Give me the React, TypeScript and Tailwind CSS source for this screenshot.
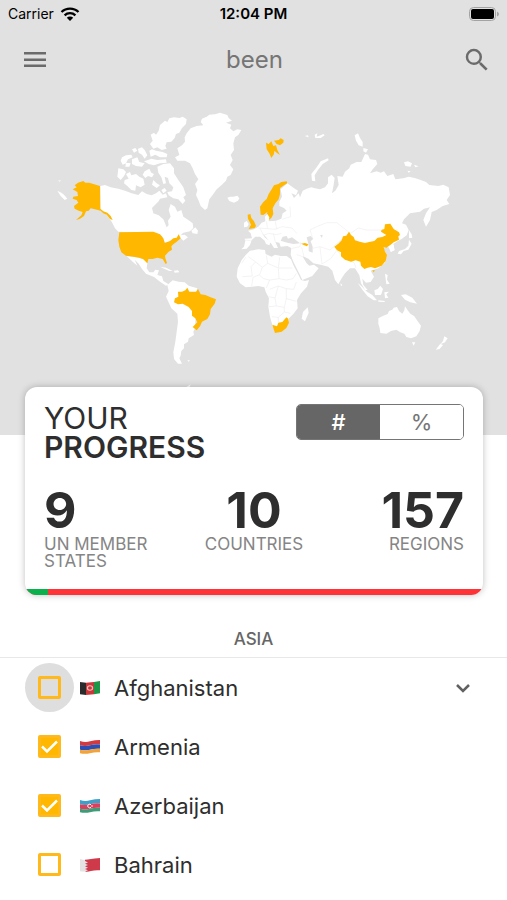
import { useState } from "react";
import type { ReactNode } from "react";

const LAND = "#ffffff";
const VISITED = "#ffb700";

const WorldMap = () => (
  <svg viewBox="0 276 1521 888" className="block w-full" role="img" aria-label="Map of visited countries">
    {/* Canada, Alaska and the arctic islands */}
    <g transform="translate(150 300)" fill={LAND}>
      <path d="M151 258 165 255 182 262 205 266 225 272 245 280 265 285 276 274 290 282 305 286 318 280 328 272 338 284 348 280 352 292 330 296 326 304 306 324 310 340 326 346 340 358 350 382 356 376 354 362 362 350 356 330 362 312 375 320 382 335 394 330 400 350 415 360 428 370 430 384 420 394 400 398 392 406 404 404 414 412 400 422 388 410 365 424 345 428 335 408 320 400 205 395 195 385 185 365 170 345 151 328Z" />
      <path d="M424 392 436 382 444 392 442 402 428 400Z" />
      <path d="M330 75 345 62 352 66 358 55 372 52 388 54 398 50 410 58 408 72 396 84 388 98 378 102 374 114 364 125 350 127 346 138 350 146 335 150 322 142 310 146 300 132 308 122 302 104 312 98 318 104 326 92Z" />
      <path d="M246 148 256 144 262 152 252 158ZM264 146 276 142 284 150 292 166 284 176 276 164 266 158ZM216 172 228 166 244 164 248 172 234 178 228 190 218 194 212 182ZM246 178 262 172 268 186 284 190 276 200 258 198 246 192ZM228 188 242 190 238 200 226 200ZM298 152 306 148 318 152 338 156 352 162 350 172 330 172 316 164 302 170ZM282 184 294 180 304 176 322 180 348 178 350 188 330 190 312 196 296 192Z" />
      <path d="M205 205 220 208 228 216 222 228 212 240 202 230ZM228 222 240 216 244 226 258 222 268 230 280 236 284 254 272 262 258 256 256 272 244 270 232 258 222 250 224 240 236 236ZM284 214 298 206 304 218 312 222 306 232 294 228 286 234 278 224ZM310 240 320 250 330 256 320 264 306 254Z" />
      <path d="M322 200 340 192 360 190 372 205 372 220 385 240 400 262 408 285 400 292 406 302 398 312 385 298 370 295 356 286 352 276 366 274 370 262 358 250 354 234 344 230 348 250 340 252 334 232 325 218ZM334 270 344 264 350 272 340 280Z" />
      <path d="M22 272 34 278 42 284 52 296 44 300 32 288ZM24 242 32 241 30 245Z" />
      <path fill={VISITED} d="M68 268 80 262 74 256 84 248 100 243 106 248 118 248 130 252 150 258 151 326 160 334 172 338 182 348 188 360 180 357 170 344 160 340 152 332 135 328 122 325 116 332 108 334 102 348 90 356 78 360 94 346 98 336 86 332 74 326 72 318 85 308 80 300 68 296 70 290 84 288 82 276Z" />
    </g>

    {/* Greenland, Iceland, Scandinavia and the British Isles */}
    <g transform="translate(510 300)" fill={LAND}>
      <path d="M22 145 36 136 45 125 44 112 50 100 62 85 80 78 100 76 92 66 96 56 110 50 118 44 135 43 150 38 172 45 176 54 186 62 168 68 184 74 180 85 190 94 202 88 214 90 205 105 195 112 190 130 192 150 182 165 188 180 180 195 190 208 182 225 172 230 168 242 155 255 140 268 128 285 118 298 112 325 105 330 92 318 85 300 78 285 82 270 75 252 85 238 75 222 68 205 60 190 45 182 22 182 15 172 28 165Z" />
      <path d="M172 293 180 290 190 290 202 287 208 295 204 302 192 308 178 303Z" />
      <path d="M222 368 230 363 236 372 232 380 222 382Z" />
      <g fill={VISITED}>
        <path d="M288 128 296 132 304 124 310 138 318 136 322 150 330 165 320 158 313 152 312 162 304 174 298 160 290 148ZM312 122 326 120 332 115 341 120 340 128 330 136 320 132Z" />
        <path d="M270 320 280 306 290 297 296 282 305 268 312 256 325 252 334 246 350 244 352 250 342 256 330 264 330 282 326 298 316 310 308 325 310 342 304 354 296 360 290 347 292 336 280 345 272 344Z" />
        <path d="M233 344 241 342 244 354 252 364 258 378 254 384 236 387 243 374 238 364 234 356Z" />
      </g>
    </g>

    {/* Europe and Asia */}
    <path
      fill={LAND}
      d="M862 550 878 562 894 572 888 586 874 580 882 594 896 580 900 592 908 572 920 566 934 562 945 565 960 568 975 562 984 550 984 532 995 524 1004 534 1000 560 996 580 1006 572 1016 555 1012 528 1028 530 1035 515 1048 505 1052 494 1070 486 1084 486 1095 462 1104 464 1110 478 1128 480 1132 492 1118 508 1110 520 1130 514 1142 518 1152 514 1162 528 1180 522 1186 538 1210 535 1226 530 1244 534 1262 540 1278 546 1288 555 1315 558 1330 554 1346 562 1350 585 1340 600 1348 612 1328 618 1310 630 1295 636 1290 660 1278 680 1270 660 1278 640 1290 622 1272 626 1260 635 1230 640 1212 658 1206 670 1218 674 1226 690 1220 706 1206 716 1192 724 1180 732 1184 750 1172 756 1166 742 1153 740 1152 750 1160 765 1155 788 1135 805 1112 812 1122 830 1112 846 1098 848 1087 836 1090 855 1103 870 1095 870 1083 850 1078 826 1065 805 1050 805 1035 820 1025 835 1015 853 1005 840 997 812 985 800 965 795 940 790 925 776 907 768 920 790 928 797 942 794 956 805 937 828 907 840 900 825 880 785 872 764 874 744 862 738 842 740 838 728 826 726 834 744 822 744 812 728 800 714 788 700 794 712 812 726 808 736 798 732 794 722 780 710 766 710 755 720 750 735 740 746 724 748 732 740 736 722 734 716 756 715 752 700 744 692 762 688 775 680 785 668 796 664 795 650 802 642 808 652 806 664 828 662 844 656 848 640 860 632 852 624 838 618 838 605 846 590 842 568Z"
    />
    {/* Inland seas */}
    <path
      fill="#e1e1e1"
      d="M842 722 848 710 860 708 864 716 876 712 892 724 900 730 880 732 862 728ZM920 712 932 708 940 716 932 724 938 740 938 758 926 754 926 736ZM960 706 968 704 966 714Z"
    />
    <path
      fill="none"
      stroke="#eeeeee"
      strokeWidth="2"
      d="M938 716 930 690 950 680 980 668 1010 668 1036 688 1050 700 1028 716 1002 738M1052 700 1075 684 1100 690 1140 690 1160 698M938 745 960 740 990 750 1004 738M905 742 912 770M960 742 966 792M966 792 992 776 1010 752 1030 770M1030 770 1062 788 1068 804M780 684 790 706 806 700 830 704 844 700M800 664 802 686 826 688 846 680 876 684 890 700M775 684 802 686M826 664 830 688M734 720 752 722M870 620 872 650 846 658M820 700 826 726M876 745 900 740 902 726M890 764 908 770"
    />

    {/* Russian arctic islands */}
    <g transform="translate(900 360)" fill={LAND}>
      <path d="M34 162 50 142 62 124 84 115 86 121 68 132 54 150 44 166 46 184 36 182ZM164 46 174 40 180 54 188 66 188 80 176 76 168 62ZM190 84 204 88 198 98 190 94ZM312 127 324 124 336 130 332 140 316 138ZM342 134 356 139 346 142ZM322 152 332 154 326 158ZM14 48 24 46 26 52ZM44 44 52 40 50 50 62 46 70 42 74 46 62 54 46 54Z" />
    </g>

    {/* Africa */}
    <g transform="translate(675 600)">
      <path
        fill={LAND}
        d="M75 152 100 148 120 150 122 162 140 170 150 164 168 168 185 168 198 178 205 195 218 220 228 240 240 243 252 240 246 260 228 280 216 300 218 325 205 342 192 355 192 368 150 396 142 375 135 350 130 320 132 295 122 275 118 262 100 258 80 260 62 262 45 250 35 230 38 205 50 180 62 165ZM234 336 248 322 251 338 240 364 230 356Z"
      />
      <path
        fill="none"
        stroke="#ededed"
        strokeWidth="2"
        d="M70 170 92 186 112 202 128 190 124 166M62 172 50 190M92 186 78 200 82 228 52 230M112 202 104 224 84 232 80 258M128 190 160 204 164 172M160 204 162 236 134 240 116 236 104 226M162 204 202 204M162 236 184 240 204 236 214 220M134 240 124 264M134 268 160 258 184 266 206 268 214 246M130 290 150 294 154 318 132 320M160 258 150 294M154 318 178 322 184 296 214 304M184 266 184 296M140 350 160 352 178 336 196 340M160 352 160 366M178 336 178 322"
      />
      <g fill={VISITED}>
        <path d="M142 374 156 379 160 368 172 366 184 352 190 356 192 368 184 384 170 395 150 399 146 388Z" />
        <path d="M228 131 240 129 250 133 246 139 238 136Z" />
      </g>
    </g>

    {/* China, south-east Asia and Oceania */}
    <g transform="translate(975 645)" fill={LAND}>
      <path d="M98 203 112 216 126 230 142 240 156 256 146 256 128 244 112 224ZM148 226 158 222 166 212 174 222 168 240 150 240ZM178 232 192 230 184 238 190 248 180 250ZM228 240 242 238 262 248 276 266 256 262 240 254ZM180 176 188 180 186 194 194 206 184 208ZM46 204 52 210 48 214ZM160 256 180 258 178 261 160 260Z" />
      <path d="M252 46 260 58 262 68 252 70ZM252 74 260 86 250 104 236 108 228 118 218 116 222 108 240 102 250 92ZM196 94 206 90 208 106 198 110ZM300 22 308 4 304 30Z" />
      <path d="M160 310 175 302 188 297 192 288 202 284 206 278 216 276 222 288 232 296 238 286 240 274 248 286 256 296 268 304 276 316 288 332 284 348 274 364 258 370 244 366 238 356 226 352 214 344 198 348 184 356 166 354 164 340 160 326ZM261 382 271 382 266 392ZM358 364 368 370 360 382 346 388 354 378ZM346 386 354 390 344 402 332 404Z" />
      <path
        fill={VISITED}
        d="M28 95 40 86 50 76 54 64 64 62 72 50 78 60 86 66 90 76 104 80 120 84 136 80 148 78 158 68 172 66 184 60 168 50 170 44 178 42 180 28 196 26 206 42 222 52 225 60 220 64 222 74 206 82 196 90 184 98 176 96 180 110 186 120 182 138 170 152 150 160 138 156 128 158 118 162 108 152 106 140 92 136 78 140 60 134 48 124 48 112 36 106ZM142 166 150 166 146 172Z"
      />
    </g>

    {/* USA and Latin America */}
    <g transform="translate(330 675)" fill={LAND}>
      <path d="M50 93 70 95 85 98 100 102 112 115 110 130 118 142 130 142 136 134 147 136 142 150 156 154 160 168 176 178 168 182 150 170 132 156 108 146 96 132 86 116 74 104 82 122 68 110ZM150 125 168 128 188 138 178 138 164 132ZM192 137 204 136 208 142 194 143Z" />
      <path d="M172 180 188 166 206 170 224 172 236 182 262 190 255 310 250 320 252 330 236 340 234 350 222 358 222 370 214 378 212 392 208 400 216 416 204 416 192 402 190 382 196 350 200 320 204 290 202 266 184 250 174 228 168 215 176 198ZM232 406 240 406 236 410ZM226 488 242 478 238 488Z" />
      <g fill={VISITED}>
        <path d="M28 22 130 20 150 28 160 40 164 54 180 48 190 40 200 38 206 28 212 40 200 50 190 58 184 64 186 74 176 80 165 92 166 100 171 114 167 117 158 102 142 98 128 102 115 102 112 115 100 103 88 98 70 95 48 92 34 82 28 65 25 45Z" />
        <path d="M195 220 205 215 204 200 216 200 226 196 232 188 238 200 258 200 264 192 272 208 286 210 300 216 318 223 314 236 302 252 300 268 292 282 276 290 270 304 260 316 248 306 262 292 256 280 246 272 246 258 236 246 218 236 204 238 192 232Z" />
      </g>
    </g>
  </svg>
);

const flags: Record<string, ReactNode> = {
  Afghanistan: (
    <>
      <path fill="#2b2b2b" d="M0 1 6 2V16L0 15Z" />
      <path fill="#c8373a" d="M6 2 14 1V15L6 16Z" />
      <path fill="#1d9645" d="M14 1 20 0V14L14 15Z" />
      <circle cx="10" cy="8" r="2.6" fill="none" stroke="#f0c0bb" strokeWidth="1.2" />
    </>
  ),
  Armenia: (
    <>
      <path fill="#d33a3f" d="M0 1Q5 3 10 1.500T20 0V5Q15 4.500 10 6T0 6Z" />
      <path fill="#2b4fb5" d="M0 6Q5 7.500 10 6T20 5V10Q15 9.500 10 11T0 11Z" />
      <path fill="#f2a33a" d="M0 11Q5 12.500 10 11T20 10V14Q15 13.500 10 15T0 15Z" />
    </>
  ),
  Azerbaijan: (
    <>
      <path fill="#3f9fc6" d="M0 1Q5 3 10 1.500T20 0V5Q15 4.500 10 6T0 6Z" />
      <path fill="#dd3e5c" d="M0 6Q5 7.500 10 6T20 5V10Q15 9.500 10 11T0 11Z" />
      <path fill="#3f9c78" d="M0 11Q5 12.500 10 11T20 10V14Q15 13.500 10 15T0 15Z" />
      <path fill="none" stroke="#ffffff" d="M11 6.500A2 2 0 1 0 11 9.500" />
      <circle cx="12" cy="8" r="0.8" fill="#ffffff" />
    </>
  ),
  Bahrain: (
    <>
      <path fill="#e4e2e2" d="M0 1Q5 3 10 1.500V15Q5 16 0 15Z" />
      <path fill="#cf3a4b" d="M5 2Q8 2 11 1.200T20 0V14Q15 13.500 11 14.800T5 15.500L8 14 5 12.500 8 11 5 9.500 8 8 5 6.500 8 5 5 3.500Z" />
    </>
  ),
};

const stats = [
  { label: "UN MEMBER STATES", value: 9, align: "text-left" },
  { label: "COUNTRIES", value: 10, align: "text-center" },
  { label: "REGIONS", value: 157, align: "text-right" },
];

const countries = [
  { name: "Afghanistan", been: false, focused: true, expandable: true },
  { name: "Armenia", been: true, focused: false, expandable: false },
  { name: "Azerbaijan", been: true, focused: false, expandable: false },
  { name: "Bahrain", been: false, focused: false, expandable: false },
];

const StatusBar = () => (
  <div className="grid grid-cols-3 items-center h-7 px-2 text-sm text-black">
    <div className="flex items-center gap-1.5">
      <span>Carrier</span>
      <svg viewBox="0 0 20 15" className="w-5 h-4" aria-hidden="true">
        <path d="M10 14.500 6.800 11.200A4.600 4.600 0 0 1 13.200 11.200Z" />
        <path fill="none" stroke="#000000" strokeWidth="2.300" d="M4.600 8.800A7.800 7.800 0 0 1 15.400 8.800M1.500 5.500A12.200 12.200 0 0 1 18.500 5.500" />
      </svg>
    </div>
    <span className="text-center text-[15px] font-semibold whitespace-nowrap">12:04 PM</span>
    <svg viewBox="0 0 30 15" className="w-[30px] h-[15px] justify-self-end" aria-hidden="true">
      <rect x="0.500" y="0.500" width="26" height="13" rx="4" fill="none" stroke="#a3a3a3" />
      <rect x="2" y="2" width="23" height="10" rx="2" />
      <path fill="#a3a3a3" d="M28 4.500Q30 5.500 30 7T28 9.500Z" />
    </svg>
  </div>
);

const TopBar = () => (
  <div className="flex items-center justify-between h-16 px-[23px] text-[#6b6b6b]">
    <button type="button" aria-label="Menu">
      <svg viewBox="0 0 24 24" className="size-6" fill="currentColor" aria-hidden="true">
        <path d="M1 4h22v2.500H1zM1 10.500h22V13H1zM1 16.500h22V19H1z" />
      </svg>
    </button>
    <h1 className="text-2xl text-[#757575]">been</h1>
    <button type="button" aria-label="Search" className="-mr-2">
      <svg viewBox="0 0 24 24" className="size-[30px]" fill="currentColor" aria-hidden="true">
        <path d="M15.500 14h-.79l-.28-.27A6.470 6.470 0 0 0 16 9.500 6.500 6.500 0 1 0 9.500 16c1.610 0 3.090-.59 4.230-1.570l.27.28v.79l5 4.990L20.490 19l-4.990-5zm-6 0C7.010 14 5 11.990 5 9.500S7.010 5 9.500 5 14 7.010 14 9.500 11.990 14 9.500 14z" />
      </svg>
    </button>
  </div>
);

const ProgressCard = () => {
  const [unit, setUnit] = useState("#");
  const progress = 5;

  return (
    <section className="relative ml-[25px] mr-6 -mt-12 rounded-xl bg-white overflow-hidden shadow-[0_0_7px_rgba(0,0,0,0.25)]">
      <div className="px-[19px] pt-[17px] pb-[19px]">
        <div className="flex justify-between items-start">
          <h2 className="text-[30px] leading-[29px] text-[#2e2e2e]">
            YOUR
            <br />
            <strong className="font-semibold">PROGRESS</strong>
          </h2>
          <div className="grid grid-cols-2 w-[168px] h-9 rounded-[5px] border border-[#757575] overflow-hidden text-[22px]">
            {["#", "%"].map((option) => (
              <button
                key={option}
                type="button"
                aria-pressed={unit === option}
                onClick={() => setUnit(option)}
                className={unit === option ? "bg-[#666666] text-white font-medium" : "bg-white text-[#757575]"}
              >
                {option}
              </button>
            ))}
          </div>
        </div>

        <div className="grid grid-cols-3 mt-6">
          {stats.map((stat) => (
            <div key={stat.label} className={stat.align}>
              <div className="text-[50px] leading-[48px] font-bold text-[#2e2e2e]">{stat.value}</div>
              <div className="mt-0.5 text-[17px] leading-[17px] text-[#858585]">{stat.label}</div>
            </div>
          ))}
        </div>
      </div>
      <div className="h-1.5 bg-[#ff3236]">
        <div className="h-full bg-[#09b04b]" style={{ width: `${progress}%` }} />
      </div>
    </section>
  );
};

const CountryRow = ({ name, been, focused, expandable }: (typeof countries)[number]) => {
  const [checked, setChecked] = useState(been);

  return (
    <li className="flex items-center h-[59px] pl-[25px] pr-8">
      <label className="flex items-center">
        <span className={`grid place-items-center size-[49px] rounded-full ${focused ? "bg-[#dedede]" : ""}`}>
          <input
            type="checkbox"
            checked={checked}
            onChange={(e) => setChecked(e.target.checked)}
            className="peer col-start-1 row-start-1 appearance-none size-[23px] rounded-xs border-3 border-[#ffb91a] checked:bg-[#ffb700]"
          />
          <svg viewBox="0 0 23 23" className="col-start-1 row-start-1 size-[23px] pointer-events-none opacity-0 peer-checked:opacity-100" aria-hidden="true">
            <path d="M4 11.500 9 16.500 19 6.500" fill="none" stroke="#ffffff" strokeWidth="2.500" />
          </svg>
        </span>
        <svg viewBox="0 0 20 16" preserveAspectRatio="none" className="ml-1.5 w-5 h-3.5" aria-hidden="true">
          {flags[name]}
        </svg>
        <span className="ml-3.5 text-[22px] leading-8 text-[#2e2e2e]">{name}</span>
      </label>
      {expandable && (
        <button type="button" aria-label={`Show regions of ${name}`} className="ml-auto">
          <svg viewBox="0 0 24 24" className="size-6" aria-hidden="true">
            <path d="M6 9 12 15 18 9" fill="none" stroke="#616161" strokeWidth="2.500" />
          </svg>
        </button>
      )}
    </li>
  );
};

const App = () => (
  <div className="min-h-screen bg-white font-['Inter','Liberation_Sans',sans-serif]">
    <header className="bg-[#e1e1e1] pb-[47px]">
      <StatusBar />
      <TopBar />
      <WorldMap />
    </header>

    <main>
      <ProgressCard />
      <section>
        <h3 className="mt-8 pb-1.5 text-center text-[17px] leading-6 font-medium text-[#666666] border-b border-[#e8e8e8]">ASIA</h3>
        <ul>
          {countries.map((country) => (
            <CountryRow key={country.name} {...country} />
          ))}
        </ul>
      </section>
    </main>
  </div>
);

export default App;
